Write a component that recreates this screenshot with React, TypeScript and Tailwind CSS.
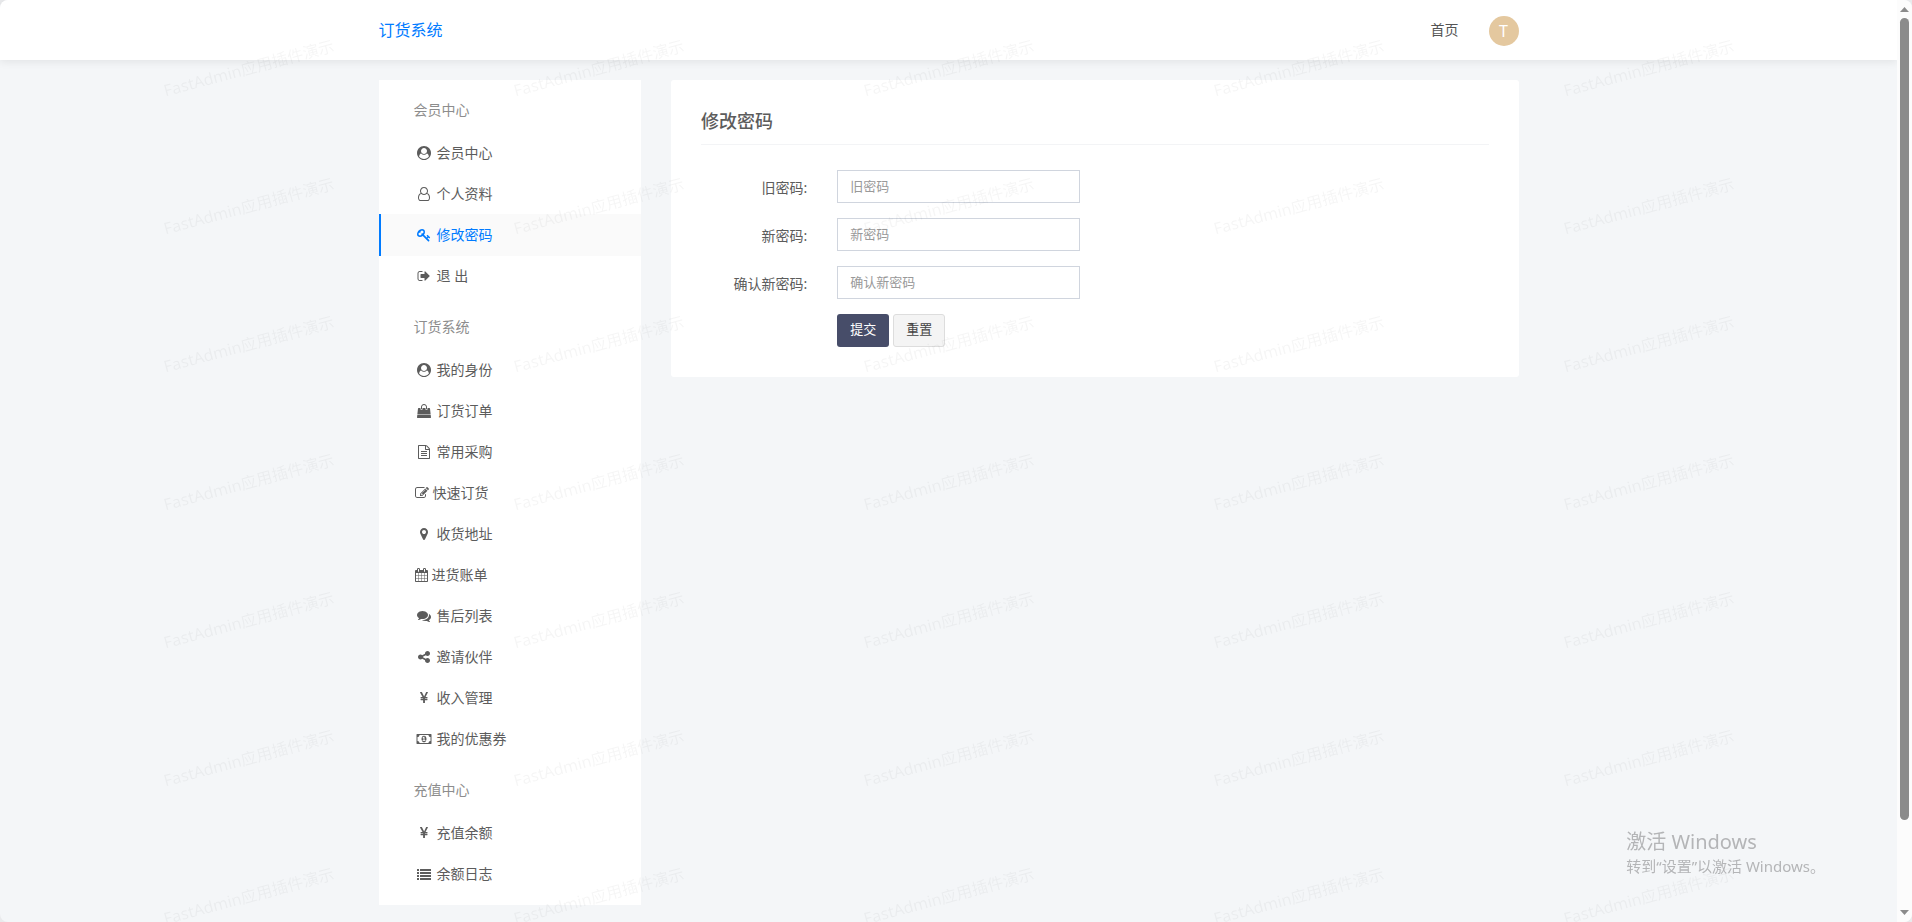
import React from "react";

type Glyph = { d: string; viewBox?: string };

const glyphs: Record<string, Glyph> = {
  userCircle: {
    d: "M1523 1339q-22-155-87.5-257.5t-184.5-118.5q-67 74-159.5 115.5t-195.5 41.5-195.5-41.5-159.5-115.5q-119 16-184.5 118.5t-87.5 257.5q106 150 271 237.5t356 87.5 356-87.5 271-237.5zm-243-699q0-159-112.5-271.5t-271.5-112.5-271.5 112.5-112.5 271.5 112.5 271.5 271.5 112.5 271.5-112.5 112.5-271.5zm512 256q0 182-71 347.5t-190.5 286-285.5 191.5-349 71q-182 0-348-71t-286-191-191-286-71-348 71-348 191-286 286-191 348-71 348 71 286 191 191 286 71 348z",
  },
  user: {
    d: "M1329 784q47 14 89.5 38t89 73 79.5 115.5 55 172 22 236.5q0 154-100 263.5t-241 109.5h-854q-141 0-241-109.5t-100-263.5q0-131 22-236.5t55-172 79.5-115.5 89-73 89.5-38q-79-125-79-272 0-104 40.5-198.5t109.5-163.5 163.5-109.5 198.5-40.5 198.5 40.5 163.5 109.5 109.5 163.5 40.5 198.5q0 147-79 272zm-433-656q-159 0-271.5 112.5t-112.5 271.5 112.5 271.5 271.5 112.5 271.5-112.5 112.5-271.5-112.5-271.5-271.5-112.5zm427 1536q88 0 150.5-71.5t62.5-173.5q0-239-78.5-377t-225.5-145q-145 127-336 127t-336-127q-147 7-225.5 145t-78.5 377q0 102 62.5 173.5t150.5 71.5h854z",
  },
  key: {
    d: "M832 512q0-80-56-136t-136-56-136 56-56 136q0 42 19 83-41-19-83-19-80 0-136 56t-56 136 56 136 136 56 136-56 56-136q0-42-19-83 41 19 83 19 80 0 136-56t56-136zm851 704q0 17-49 66t-66 49q-9 0-28.5-16t-36.5-33-38.5-40-24.5-26l-96 96 220 220q28 28 28 68 0 42-39 81t-81 39q-40 0-68-28l-671-671q-176 131-365 131-163 0-265.5-102.5t-102.5-265.5q0-160 95-313t248-248 313-95q163 0 265.5 102.5t102.5 265.5q0 189-131 365l355 355 96-96q-3-3-26-24.5t-40-38.5-33-36.5-16-28.5q0-17 49-66t66-49q13 0 23 10 6 6 46 44.5t82 79.5 86.5 86 73 78 28.5 41z",
  },
  signOut: {
    d: "M704 1440q0 4 1 20t.5 26.5-3 23.5-10 19.5-20.5 6.5h-320q-119 0-203.5-84.5t-84.5-203.5v-704q0-119 84.5-203.5t203.5-84.5h320q13 0 22.5 9.5t9.5 22.5q0 4 1 20t.5 26.5-3 23.5-10 19.5-20.5 6.5h-320q-66 0-113 47t-47 113v704q0 66 47 113t113 47h312l11.5 1 11.5 3 8 5.5 7 9 2 13.5zm928-544q0 26-19 45l-544 544q-19 19-45 19t-45-19-19-45v-288h-448q-26 0-45-19t-19-45v-384q0-26 19-45t45-19h448v-288q0-26 19-45t45-19 45 19l544 544q19 19 19 45z",
  },
  bag: {
    d: "M1757 1408l35 313q3 28-16 50-19 21-48 21h-1664q-29 0-48-21-19-22-16-50l35-313h1722zm-93-839l86 775h-1708l86-775q3-24 21-40.5t43-16.5h256v128q0 53 37.5 90.5t90.5 37.5 90.5-37.5 37.5-90.5v-128h384v128q0 53 37.5 90.5t90.5 37.5 90.5-37.5 37.5-90.5v-128h256q25 0 43 16.5t21 40.5zm-384-185v256q0 26-19 45t-45 19-45-19-19-45v-256q0-106-75-181t-181-75-181 75-75 181v256q0 26-19 45t-45 19-45-19-19-45v-256q0-159 112.5-271.5t271.5-112.5 271.5 112.5 112.5 271.5z",
  },
  file: {
    d: "M1596 380q28 28 48 76t20 88v1152q0 40-28 68t-68 28h-1344q-40 0-68-28t-28-68v-1600q0-40 28-68t68-28h896q40 0 88 20t76 48zm-444-244v376h376q-10-29-22-41l-313-313q-12-12-41-22zm384 1528v-1024h-416q-40 0-68-28t-28-68v-416h-768v1536h1280zm-1024-864q0-14 9-23t23-9h704q14 0 23 9t9 23v64q0 14-9 23t-23 9h-704q-14 0-23-9t-9-23v-64zm736 224q14 0 23 9t9 23v64q0 14-9 23t-23 9h-704q-14 0-23-9t-9-23v-64q0-14 9-23t23-9h704zm0 256q14 0 23 9t9 23v64q0 14-9 23t-23 9h-704q-14 0-23-9t-9-23v-64q0-14 9-23t23-9h704z",
  },
  edit: {
    d: "M888 1184l116-116-152-152-116 116v56h96v96h56zm440-720q-16-16-33 1l-350 350q-17 17-1 33t33-1l350-350q17-17 1-33zm80 594v190q0 119-84.5 203.5t-203.5 84.5h-832q-119 0-203.5-84.5t-84.5-203.5v-832q0-119 84.5-203.5t203.5-84.5h832q63 0 117 25 15 7 18 23 3 17-9 29l-49 49q-14 14-32 8-23-6-45-6h-832q-66 0-113 47t-47 113v832q0 66 47 113t113 47h832q66 0 113-47t47-113v-126q0-13 9-22l64-64q15-15 35-7t20 29zm-96-738l288 288-672 672h-288v-288zm444 132l-92 92-288-288 92-92q28-28 68-28t68 28l152 152q28 28 28 68t-28 68z",
  },
  marker: {
    d: "M1152 640q0-106-75-181t-181-75-181 75-75 181 75 181 181 75 181-75 75-181zm256 0q0 109-33 179l-364 774q-16 33-47.5 52t-67.5 19-67.5-19-46.5-52l-365-774q-33-70-33-179 0-212 150-362t362-150 362 150 150 362z",
  },
  calendar: {
    d: "M192 1664h288v-288h-288v288zm352 0h320v-288h-320v288zm-352-352h288v-320h-288v320zm352 0h320v-320h-320v320zm-352-384h288v-288h-288v288zm736 736h320v-288h-320v288zm-384-736h320v-288h-320v288zm768 736h288v-288h-288v288zm-384-352h320v-320h-320v320zm-352-864v-288q0-13-9.5-22.5t-22.5-9.5h-64q-13 0-22.5 9.5t-9.5 22.5v288q0 13 9.5 22.5t22.5 9.5h64q13 0 22.5-9.5t9.5-22.5zm736 864h288v-320h-288v320zm-384-384h320v-288h-320v288zm384 0h288v-288h-288v288zm32-480v-288q0-13-9.5-22.5t-22.5-9.5h-64q-13 0-22.5 9.5t-9.5 22.5v288q0 13 9.5 22.5t22.5 9.5h64q13 0 22.5-9.5t9.5-22.5zm384-64v1280q0 52-38 90t-90 38h-1408q-52 0-90-38t-38-90v-1280q0-52 38-90t90-38h128v-96q0-66 47-113t113-47h64q66 0 113 47t47 113v96h384v-96q0-66 47-113t113-47h64q66 0 113 47t47 113v96h128q52 0 90 38t38 90z",
    viewBox: "64 0 1664 1792",
  },
  comments: {
    d: "M1408 768q0 139-94 257t-256.5 186.5-353.5 68.5q-86 0-176-16-124 88-278 128-36 9-86 16h-3q-11 0-20.5-8t-11.5-21q-1-3-1-6.5t.5-6.5 2-6l2.5-5 3.5-5.5 4-5 4.5-5 4-4.5q5-6 23-25t26-29.5 22.5-29 25-38.5 20.5-44q-124-72-195-177t-71-224q0-139 94-257t256.5-186.5 353.5-68.5 353.5 68.5 256.5 186.5 94 257zm384 256q0 120-71 224.5t-195 176.5q10 24 20.5 44t25 38.5 22.5 29 26 29.5 23 25q1 1 4 4.5t4.5 5 4 5 3.5 5.5l2.5 5 2 6 .5 6.5-1 6.5q-3 14-13 22t-22 7q-50-7-86-16-154-40-278-128-90 16-176 16-271 0-472-132 58 4 88 4 161 0 309-45t264-129q125-92 192-212t67-254q0-77-23-152 129 71 204 178t75 230z",
  },
  share: {
    d: "M1344 1024q133 0 226.5 93.5t93.5 226.5-93.5 226.5-226.5 93.5-226.5-93.5-93.5-226.5q0-12 2-34l-360-180q-92 86-218 86-133 0-226.5-93.5t-93.5-226.5 93.5-226.5 226.5-93.5q126 0 218 86l360-180q-2-22-2-34 0-133 93.5-226.5t226.5-93.5 226.5 93.5 93.5 226.5-93.5 226.5-226.5 93.5q-126 0-218-86l-360 180q2 22 2 34t-2 34l360 180q92-86 218-86z",
  },
  yen: {
    d: "M985.5 1536h-172q-13 0-22.5-9t-9.5-23v-330h-288q-13 0-22.5-9t-9.5-23v-103q0-13 9.5-22.5t22.5-9.5h288v-85h-288q-13 0-22.5-9t-9.5-23v-104q0-13 9.5-22.5t22.5-9.5h214l-321-578q-8-16 0-32 10-16 28-16h194q19 0 29 18l215 425q19 38 56 125 10-24 30.5-68t27.5-61l191-420q8-19 29-19h191q17 0 27 16 9 14 1 31l-313 579h215q13 0 22.5 9.5t9.5 22.5v104q0 14-9.5 23t-22.5 9h-290v85h290q13 0 22.5 9.5t9.5 22.5v103q0 14-9.5 23t-22.5 9h-290v330q0 13-9.5 22.5t-22.5 9.5z",
  },
  money: {
    d: "M768 1152h384v-96h-128v-448h-114l-148 137 77 80q42-37 55-57h2v288h-128v96zm512-256q0 70-21 142t-59.5 134-101.5 101-138 39-138-39-101.5-101-59.5-134-21-142 21-142 59.5-134 101.5-101 138-39 138 39 101.5 101 59.5 134 21 142zm512 256v-512q-106 0-181-75t-75-181h-1152q0 106-75 181t-181 75v512q106 0 181 75t75 181h1152q0-106 75-181t181-75zm128-832v1152q0 26-19 45t-45 19h-1792q-26 0-45-19t-19-45v-1152q0-26 19-45t45-19h1792q26 0 45 19t19 45z",
    viewBox: "64 0 1792 1792",
  },
  list: {
    d: "M32 256h192q32 0 32 32v192q0 32-32 32h-192q-32 0-32-32v-192q0-32 32-32zM32 640h192q32 0 32 32v192q0 32-32 32h-192q-32 0-32-32v-192q0-32 32-32zM32 1024h192q32 0 32 32v192q0 32-32 32h-192q-32 0-32-32v-192q0-32 32-32zM32 1408h192q32 0 32 32v192q0 32-32 32h-192q-32 0-32-32v-192q0-32 32-32zM416 256h1344q32 0 32 32v192q0 32-32 32h-1344q-32 0-32-32v-192q0-32 32-32zM416 640h1344q32 0 32 32v192q0 32-32 32h-1344q-32 0-32-32v-192q0-32 32-32zM416 1024h1344q32 0 32 32v192q0 32-32 32h-1344q-32 0-32-32v-192q0-32 32-32zM416 1408h1344q32 0 32 32v192q0 32-32 32h-1344q-32 0-32-32v-192q0-32 32-32z",
  },
};

type Item = { icon: string; label: string; narrow?: boolean; active?: boolean };

const groups: { title: string; items: Item[] }[] = [
  {
    title: "会员中心",
    items: [
      { icon: "userCircle", label: "会员中心" },
      { icon: "user", label: "个人资料" },
      { icon: "key", label: "修改密码", active: true },
      { icon: "signOut", label: "退 出" },
    ],
  },
  {
    title: "订货系统",
    items: [
      { icon: "userCircle", label: "我的身份" },
      { icon: "bag", label: "订货订单" },
      { icon: "file", label: "常用采购" },
      { icon: "edit", label: "快速订货", narrow: true },
      { icon: "marker", label: "收货地址" },
      { icon: "calendar", label: "进货账单", narrow: true },
      { icon: "comments", label: "售后列表" },
      { icon: "share", label: "邀请伙伴" },
      { icon: "yen", label: "收入管理" },
      { icon: "money", label: "我的优惠券" },
    ],
  },
  {
    title: "充值中心",
    items: [
      { icon: "yen", label: "充值余额" },
      { icon: "list", label: "余额日志" },
    ],
  },
];

const fields = [
  { id: "oldpassword", label: "旧密码" },
  { id: "newpassword", label: "新密码" },
  { id: "renewpassword", label: "确认新密码" },
];

function Icon({ name, narrow }: { name: string; narrow?: boolean }) {
  const { d, viewBox = "0 0 1792 1792" } = glyphs[name];
  return (
    <span className={narrow ? "flex shrink-0" : "flex w-[18px] shrink-0 justify-center"}>
      <svg
        aria-hidden="true"
        viewBox={viewBox}
        className={
          name === "calendar"
            ? "h-3.5 w-[13px] fill-current"
            : "h-3.5 w-3.5 overflow-visible fill-current"
        }
      >
        <path d={d} />
      </svg>
    </span>
  );
}

function Sidebar() {
  return (
    <nav className="bg-white pb-2.5">
      {groups.map((group) => (
        <section key={group.title}>
          <h2 className="px-[35px] pt-5 pb-3 text-sm leading-5 text-[#8d8d8d]">{group.title}</h2>
          <ul>
            {group.items.map((item) => (
              <li key={item.label} className="-mb-px last:mb-0">
                <a
                  href="#"
                  className={
                    item.active
                      ? "flex h-[42px] items-center gap-1 border-l-2 border-[#007bff] bg-[#fafafa] pl-[34px] text-sm text-[#007bff]"
                      : "flex h-[42px] items-center gap-1 border-l-2 border-transparent pl-[34px] text-sm text-[#5c5c5c]"
                  }
                >
                  <Icon name={item.icon} narrow={item.narrow} />
                  {item.label}
                </a>
              </li>
            ))}
          </ul>
        </section>
      ))}
    </nav>
  );
}

function PasswordForm() {
  return (
    <form className="rounded-[3px] bg-white p-[30px]" onSubmit={(e) => e.preventDefault()}>
      <h1 className="mb-[25px] border-b border-[#f3f4f6] pb-3 text-lg leading-[22px] font-medium text-[#5c5c5c]">
        修改密码
      </h1>
      <div className="-mx-[15px] flex flex-col gap-[15px]">
        {fields.map((field) => (
          <div key={field.id} className="flex">
            <label htmlFor={field.id} className="w-1/6 px-[15px] pt-2 text-right text-sm leading-5 text-[#5c5c5c]">
              {field.label}:
            </label>
            <div className="w-1/3 px-[15px]">
              <input
                id={field.id}
                type="password"
                placeholder={field.label}
                className="block h-[33px] w-full border border-[#d0d5de] bg-white px-3 pb-0.5 text-[13px] text-[#555] placeholder:text-[#999]"
              />
            </div>
          </div>
        ))}
        <div className="ml-[16.6667%] flex gap-1 px-[15px]">
          <button type="submit" className="h-[33px] w-[52px] rounded-[3px] bg-[#474d69] pb-0.5 text-[13px] text-white">
            提交
          </button>
          <button
            type="reset"
            className="h-[33px] w-[52px] rounded-[3px] border border-[#ddd] bg-[#f4f4f4] pb-0.5 text-[13px] text-[#444]"
          >
            重置
          </button>
        </div>
      </div>
    </form>
  );
}

function Watermark() {
  return (
    <div
      aria-hidden="true"
      className="pointer-events-none fixed inset-0 -top-px z-20 grid auto-rows-[138px] grid-cols-[repeat(auto-fill,350px)] overflow-hidden pl-[74px] select-none"
    >
      {Array.from({ length: 35 }, (_, i) => (
        <span key={i} className="flex items-center justify-center">
          <span className="-rotate-15 text-base whitespace-nowrap text-black/4">FastAdmin应用插件演示</span>
        </span>
      ))}
    </div>
  );
}

function ScrollTrack() {
  return (
    <div
      aria-hidden="true"
      className="fixed inset-y-0 right-0 z-30 flex w-[15px] flex-col items-center rounded-r-lg bg-[#fcfcfc] py-[7px]"
    >
      <svg viewBox="0 0 9 5" className="h-[5px] w-[9px] shrink-0 fill-[#8b8b8b]">
        <path d="M4.5 0 9 5H0z" />
      </svg>
      <div className="flex min-h-0 w-full flex-1 flex-col px-[3px] py-1.5">
        <div className="flex-[19] rounded-full bg-[#8b8b8b]" />
        <div className="flex-[2]" />
      </div>
      <svg viewBox="0 0 9 5" className="h-[5px] w-[9px] shrink-0 fill-[#8b8b8b]">
        <path d="M4.5 5 9 0H0z" />
      </svg>
    </div>
  );
}

export default function App() {
  return (
    <div className="bg-[#e9eaec] font-['Noto_Sans','Noto_Sans_CJK_SC',sans-serif]">
      <div className="min-h-screen rounded-lg bg-[#f4f6f8] pr-[15px]">
        <header className="h-[60px] rounded-tl-lg bg-white shadow-[0_2px_8px_rgba(0,0,0,0.08)]">
          <div className="mx-auto flex h-full max-w-[1170px] items-center justify-between px-[15px]">
            <a href="#" className="text-base text-[#007bff]">
              订货系统
            </a>
            <div className="flex items-center gap-[30px]">
              <a href="#" className="text-sm text-[#555]">
                首页
              </a>
              <a
                href="#"
                className="mt-0.5 flex size-[30px] items-center justify-center rounded-full bg-[#e4c89f] text-base text-white"
              >
                T
              </a>
            </div>
          </div>
        </header>
        <main className="mx-auto flex max-w-[1170px] items-start pt-5">
          <div className="w-1/4 px-[15px]">
            <Sidebar />
          </div>
          <div className="w-3/4 px-[15px]">
            <PasswordForm />
          </div>
        </main>
      </div>
      <Watermark />
      <ScrollTrack />
      <div className="pointer-events-none fixed right-[87px] bottom-11 z-20 text-[#b4b5b7]">
        <p className="text-xl leading-6">激活 Windows</p>
        <p className="text-[15px] leading-6">转到“设置”以激活 Windows。</p>
      </div>
    </div>
  );
}
